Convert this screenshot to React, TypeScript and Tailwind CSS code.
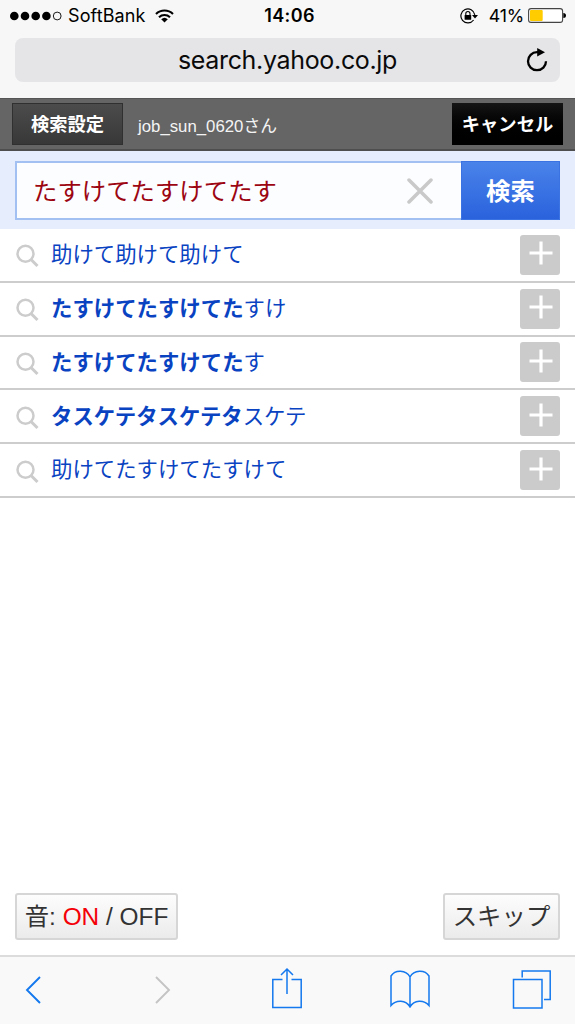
import React from "react";

interface Suggestion {
  match: string;
  rest: string;
}

const suggestions: Suggestion[] = [
  { match: "", rest: "助けて助けて助けて" },
  { match: "たすけてたすけてた", rest: "すけ" },
  { match: "たすけてたすけてた", rest: "す" },
  { match: "タスケテタスケテタ", rest: "スケテ" },
  { match: "", rest: "助けてたすけてたすけて" },
];

const StatusBar: React.FC = () => (
  <div className="grid h-8 grid-cols-[1fr_auto_1fr] items-center pl-[10px] pr-[9px] font-['Inter',sans-serif] text-black">
    <div className="flex items-center">
      <svg width="53" height="10" viewBox="0 0 53 10" className="mr-[5px]">
        <circle cx="4.3" cy="5" r="4.3" />
        <circle cx="15" cy="5" r="4.3" />
        <circle cx="25.7" cy="5" r="4.3" />
        <circle cx="36.4" cy="5" r="4.3" />
        <circle cx="47.2" cy="5" r="3.9" fill="none" stroke="#000" strokeWidth="0.9" />
      </svg>
      <span className="text-[18px] leading-none tracking-[0.1px]">SoftBank</span>
      <svg width="19" height="14" viewBox="0 0 19 14" className="ml-[10px]">
        <g fill="none" stroke="#000" strokeWidth="2.1">
          <path d="M1 5 A12.2 12.2 0 0 1 18 5" />
          <path d="M4 8.2 A8 8 0 0 1 15 8.2" />
        </g>
        <path d="M6.2 10.3 A4.8 4.8 0 0 1 12.8 10.3 L9.5 13.6 Z" />
      </svg>
    </div>
    <span className="pl-[3px] text-[18px] font-semibold leading-none tracking-[0.4px]">14:06</span>
    <div className="flex items-center justify-end">
      <svg width="18" height="16" viewBox="0 0 18 16" className="mr-[11px]">
        <path d="M13.6 12 A7 7 0 1 1 14.8 6.8" fill="none" stroke="#000" strokeWidth="1.2" />
        <path d="M12 7 H18 L15 10.5 Z" />
        <rect x="4.6" y="7" width="6.6" height="4.8" rx="0.5" />
        <path d="M5.8 7.5 V5.6 A2.1 2.1 0 0 1 10 5.6 V7.5" fill="none" stroke="#000" strokeWidth="1.1" />
      </svg>
      <span className="text-[17.8px] leading-none tracking-[-0.2px]">41%</span>
      <svg width="38" height="15" viewBox="0 0 38 15" className="ml-[4px]">
        <rect x="0.6" y="0.6" width="34" height="13.8" rx="2.5" fill="#fff" stroke="#444" strokeWidth="1.1" />
        <rect x="2" y="2" width="12.7" height="11" rx="1" fill="#fc0" />
        <path d="M35.3 5 Q38 5 38 7.5 T35.3 10 Z" />
      </svg>
    </div>
  </div>
);

const AddressBar: React.FC = () => (
  <div className="mx-[15px] mt-[6px] grid h-[44px] grid-cols-[1fr_auto_1fr] items-center rounded-[8px] bg-[#e5e5e8] pr-[12px]">
    <span />
    <span className="ml-[12px] font-['Inter',sans-serif] text-[25px] leading-none tracking-[-0.33px] text-[#0a0a0a]">
      search.yahoo.co.jp
    </span>
    <svg width="22" height="24" viewBox="0 0 22 24" className="justify-self-end">
      <path d="M13 4.2 H11 A9 9 0 1 0 20 13.2" fill="none" stroke="#000" strokeWidth="2.3" />
      <path d="M11.2 0 L19 4.3 L11.2 8.6 Z" />
    </svg>
  </div>
);

const SuggestionRow: React.FC<Suggestion> = ({ match, rest }) => (
  <li className="flex h-[53.8px] items-center border-b-2 border-[#cdcdcd] pl-[16px] pr-[15px]">
    <svg width="23" height="24" viewBox="0 0 23 24" className="mt-[3px]" fill="none" stroke="#ccc">
      <circle cx="9.5" cy="9.8" r="8" strokeWidth="2.5" />
      <path d="M15 15.5 L21.5 22" strokeWidth="3" />
    </svg>
    <span className="ml-[12px] mt-[2px] grow whitespace-nowrap text-[21.4px] leading-none text-[#0a43c2]">
      {match && <b className="font-bold">{match}</b>}
      {rest}
    </span>
    <button type="button" className="flex size-[40px] items-center justify-center rounded-[3px] bg-[#cbcbcb]">
      <svg width="24" height="24" viewBox="0 0 24 24" className="mb-[3px] ml-px" stroke="#fff" strokeWidth="3.2">
        <path d="M12 0.5 V23.5 M0.5 12 H23.5" />
      </svg>
    </button>
  </li>
);

const Toolbar: React.FC = () => (
  <nav className="flex h-[69px] shrink-0 items-center border-t-2 border-[#dcdcdc] bg-[#f9f9f9] pl-[25px]">
    <svg width="17" height="28" viewBox="0 0 17 28" fill="none" stroke="#1478ee" strokeWidth="1.9" className="mb-px">
      <path d="M15 1 L2 14 L15 27" />
    </svg>
    <svg width="17" height="28" viewBox="0 0 17 28" fill="none" stroke="#c4c4c4" strokeWidth="1.9" className="mb-px ml-[113px]">
      <path d="M1 1 L14 14 L1 27" />
    </svg>
    <svg width="30" height="42" viewBox="0 0 30 42" fill="none" stroke="#1478ee" strokeWidth="1.5" className="mb-[5px] ml-[100px]">
      <path d="M10.5 12.5 H0.8 V40.5 H29.2 V12.5 H19.5" />
      <path d="M15 27 V2 M9 8 L15 2 L21 8" />
    </svg>
    <svg width="40" height="38" viewBox="0 0 40 38" fill="none" stroke="#1478ee" strokeWidth="1.5" className="mb-[3px] ml-[88px]">
      <path d="M20 37 V7 C16 -0.5 5 -0.5 1 6 V35.5 C6 29.5 16 29.5 20 37 C24 29.5 34 29.5 39 35.5 V6 C35 -0.5 24 -0.5 20 7" />
    </svg>
    <svg width="40" height="39" viewBox="0 0 40 39" fill="none" stroke="#1478ee" strokeWidth="1.5" className="mb-[2px] ml-[82px]">
      <rect x="1.5" y="9.5" width="28.5" height="28.5" />
      <path d="M10.2 7.5 V1 H38.2 V29.5 H32" />
    </svg>
  </nav>
);

export default function App() {
  return (
    <div className="flex h-[1024px] w-[575px] flex-col overflow-hidden bg-white font-['Liberation_Sans','Noto_Sans_CJK_JP',sans-serif]">
      <header className="h-[98px] shrink-0 bg-[#f7f7f7]">
        <StatusBar />
        <AddressBar />
      </header>

      <div className="flex h-[53px] shrink-0 items-center border-b-2 border-t border-b-[#4e4e4e] border-t-[#555] bg-[#656565] px-[12px]">
        <button type="button" className="flex h-[42px] w-[111px] items-center justify-center border-[1.5px] border-[#303030] bg-linear-to-b from-[#4c4c4c] to-[#383838] pt-[3px] text-[18.3px] font-bold leading-none text-white">
          検索設定
        </button>
        <span className="ml-[15px] mt-[6px] grow text-[16.8px] leading-none text-[#f4f4f4]">job_sun_0620さん</span>
        <button type="button" className="flex h-[42px] w-[111px] items-center justify-center whitespace-nowrap bg-linear-to-b from-[#151515] to-black pt-[2px] text-[18.3px] font-bold leading-none text-white">
          キャンセル
        </button>
      </div>

      <div className="flex h-[78px] shrink-0 bg-[#e6edfd] px-[15px] pb-[9px] pt-[10px]">
        <div className="flex grow items-center justify-between border-2 border-r-0 border-[#a3c0f3] bg-[#fcfdff] pl-[16px] pr-[28px]">
          <span className="mt-[3px] text-[24.4px] leading-none text-[#9c0612]">たすけてたすけてたす</span>
          <svg width="26" height="26" viewBox="0 0 26 26" stroke="#c9c9c9" strokeWidth="3.5" strokeLinecap="round">
            <path d="M2 2 L24 24 M24 2 L2 24" />
          </svg>
        </div>
        <button type="button" className="flex w-[99px] items-center justify-center border border-[#3b73e3] bg-linear-to-b from-[#4a83e9] to-[#2a62dd] pt-[4px] text-[24.4px] font-bold leading-none text-white">
          検索
        </button>
      </div>

      <ul className="shrink-0">
        {suggestions.map((s, i) => (
          <SuggestionRow key={i} {...s} />
        ))}
      </ul>

      <div className="mt-auto flex shrink-0 justify-between px-[15px] pb-[15px] text-[24.4px] leading-none text-[#333]">
        <button type="button" className="flex h-[47px] w-[163px] items-center justify-center whitespace-pre rounded-[3px] border-2 border-[#d6d6d6] bg-linear-to-b from-[#fdfdfd] to-[#ebebeb] pt-[2px]">
          音: <span className="text-[#f40008]">ON</span> / OFF
        </button>
        <button type="button" className="flex h-[47px] w-[117px] items-center justify-center rounded-[3px] border-2 border-[#d6d6d6] bg-linear-to-b from-[#fdfdfd] to-[#ebebeb] pt-[2px]">
          スキップ
        </button>
      </div>

      <Toolbar />
    </div>
  );
}
